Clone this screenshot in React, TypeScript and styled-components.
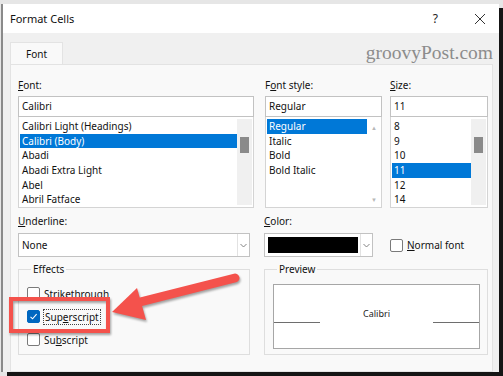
import React from 'react'
import styled, { createGlobalStyle } from 'styled-components'

const GlobalStyle = createGlobalStyle`
    body {
        margin: 0;
        font-family: "Noto Sans", "Segoe UI", sans-serif;
    }
`

const Frame = styled.div`
    position: relative;
    width: 503px;
    height: 376px;
    box-sizing: border-box;
    padding: 4px 0 0 3px;
    background: #e6e6e6;
    overflow: hidden;
`

const Dialog = styled.div`
    display: flex;
    flex-direction: column;
    width: 496px;
    height: 368px;
    background: #f0f0f0;
    box-shadow: 4px 4px 0 #151515, -2px 0 0 #8a8a8a;
    color: #111;
`

const TitleBar = styled.div`
    display: flex;
    align-items: center;
    height: 29px;
    flex: 0 0 29px;
    padding: 0 13px 0 7px;
    background: #fff;
    font-size: 11px;
`

const TitleControls = styled.div`
    display: flex;
    align-items: center;
    gap: 36px;
    margin-left: auto;
    font-size: 12px;
    color: #222;
`

const Body = styled.div`
    display: flex;
    flex-direction: column;
    flex: 1;
    padding: 9px 6px 0 7px;
`

const TabRow = styled.div`
    display: flex;
    align-items: flex-end;
    height: 22px;
`

const Tab = styled.div`
    box-sizing: border-box;
    width: 53px;
    height: 23px;
    margin-bottom: -1px;
    padding-left: 15px;
    line-height: 22px;
    font-size: 10px;
    background: #f9f9f9;
    border: 1px solid #e3e3e3;
    border-bottom: none;
`

const Watermark = styled.div`
    align-self: center;
    margin-left: auto;
    font-family: "Liberation Serif", serif;
    font-size: 19.5px;
    line-height: 20px;
    color: #8c8c8c;
`

const Panel = styled.div`
    flex: 1;
    padding: 12px 4px 0 7px;
    background: #f9f9f9;
    border: 1px solid #e3e3e3;
    font-size: 10px;
`

const Row = styled.div<{ $gapTop?: number }>`
    display: flex;
    align-items: flex-start;
    margin-top: ${p => p.$gapTop ?? 0}px;
`

const Column = styled.div<{ $width: number; $left?: number }>`
    display: flex;
    flex-direction: column;
    width: ${p => p.$width}px;
    margin-left: ${p => p.$left ?? 0}px;
`

const Label = styled.div<{ $h?: number }>`
    height: ${p => p.$h ?? 19}px;
    line-height: 17px;
    white-space: nowrap;
`

const U = styled.span`
    text-decoration: underline;
    text-underline-offset: 1px;
`

const TextInput = styled.div`
    box-sizing: border-box;
    height: 21px;
    padding-left: 3px;
    line-height: 19px;
    background: #fff;
    border: 1px solid #c2c2c2;
`

const List = styled.div`
    box-sizing: border-box;
    display: flex;
    height: 91px;
    background: #fff;
    border: 1px solid #d4d4d4;
    border-top: none;
`

const Items = styled.div`
    flex: 1;
    padding: 2px 0 0 1px;
    overflow: hidden;
`

const Item = styled.div<{ $selected?: boolean }>`
    height: 14.7px;
    line-height: 14.7px;
    padding-left: 2px;
    white-space: nowrap;
    background: ${p => (p.$selected ? '#0078d7' : 'transparent')};
    color: ${p => (p.$selected ? '#fff' : '#111')};
`

const ScrollTrack = styled.div`
    display: flex;
    flex-direction: column;
    align-items: center;
    width: 15px;
    margin: 2px 1px 2px 0;
    padding-top: 18px;
    box-sizing: border-box;
    background: #f0f0f0;
`

const Thumb = styled.div`
    width: 9px;
    height: 16px;
    background: #8a8a8a;
`

const ArrowTrack = styled.div`
    display: flex;
    flex-direction: column;
    align-items: center;
    justify-content: space-between;
    width: 14px;
    padding: 7px 0 3px;
    box-sizing: border-box;
    color: #b8b8b8;
    font-size: 6px;
`

const Dropdown = styled.div`
    box-sizing: border-box;
    display: flex;
    height: 24px;
    background: #fff;
    border: 1px solid #c2c2c2;
`

const DropValue = styled.div`
    flex: 1;
    padding-left: 3px;
    line-height: 22px;
`

const Swatch = styled.div`
    flex: 1;
    margin: 3px 2px 3px 3px;
    background: #000;
`

const DropArrow = styled.div`
    display: flex;
    align-items: center;
    justify-content: center;
    width: 11px;
    border-left: 1px solid #e2e2e2;
`

const CheckRow = styled.label<{ $h?: number }>`
    display: flex;
    align-items: center;
    gap: 4px;
    height: ${p => p.$h ?? 23}px;
    white-space: nowrap;
`

const Box = styled.span<{ $checked?: boolean }>`
    box-sizing: border-box;
    display: inline-flex;
    align-items: center;
    justify-content: center;
    width: 13px;
    height: 13px;
    border-radius: 2px;
    border: 1px solid ${p => (p.$checked ? '#0067c0' : '#7a7a7a')};
    background: ${p => (p.$checked ? '#0067c0' : '#fff')};
`

const Focused = styled.span`
    padding: 0 1px;
    outline: 1px dotted #444;
`

const Group = styled.fieldset<{ $width: number; $left?: number }>`
    box-sizing: border-box;
    width: ${p => p.$width}px;
    height: 93px;
    margin: 0 0 0 ${p => p.$left ?? 0}px;
    padding: 0 7px 0 8px;
    border: 1px solid #dedede;
    min-width: 0;
`

const Legend = styled.legend`
    margin-left: 4px;
    padding: 0 2px;
    line-height: 14px;
    font-size: 10px;
`

const Checks = styled.div`
    padding-top: 6px;
`

const PreviewBox = styled.div`
    box-sizing: border-box;
    display: flex;
    align-items: center;
    height: 65px;
    margin-top: 8px;
    background: #fff;
    border: 1px solid #a6a6a6;
`

const BaseLine = styled.div`
    flex: 0 0 46px;
    height: 1px;
    margin-top: 11px;
    background: #6e6e6e;
`

const Sample = styled.div`
    flex: 1;
    margin-top: -7px;
    text-align: center;
    font-size: 9px;
    color: #222;
`

const Annotation = styled.svg`
    position: absolute;
    left: 0;
    top: 0;
    pointer-events: none;
    filter: drop-shadow(1px 2px 1px rgba(0, 0, 0, 0.35));
`

const Check = () => (
    <svg width="9" height="9" viewBox="0 0 9 9">
        <path d="M1.5 4.8 L3.6 6.8 L7.6 2.2" fill="none" stroke="#fff" strokeWidth="1.1" />
    </svg>
)

const Chevron = () => (
    <svg width="7" height="5" viewBox="0 0 7 5">
        <path d="M0.5 1 L3.5 4 L6.5 1" fill="none" stroke="#777" strokeWidth="0.9" />
    </svg>
)

const fonts = ['Calibri Light (Headings)', 'Calibri (Body)', 'Abadi', 'Abadi Extra Light', 'Abel', 'Abril Fatface']
const styles = ['Regular', 'Italic', 'Bold', 'Bold Italic']
const sizes = ['8', '9', '10', '11', '12', '14']

const App = () => {
    return (
        <Frame>
            <GlobalStyle />
            <Dialog>
                <TitleBar>
                    Format Cells
                    <TitleControls>
                        <span>?</span>
                        <svg width="12" height="12" viewBox="0 0 12 12">
                            <path d="M1 1 L11 11 M11 1 L1 11" stroke="#333" strokeWidth="1" />
                        </svg>
                    </TitleControls>
                </TitleBar>
                <Body>
                    <TabRow>
                        <Tab>Font</Tab>
                        <Watermark>groovyPost.com</Watermark>
                    </TabRow>
                    <Panel>
                        <Row>
                            <Column $width={236}>
                                <Label><U>F</U>ont:</Label>
                                <TextInput>Calibri</TextInput>
                                <List>
                                    <Items>
                                        {fonts.map(f => (
                                            <Item key={f} $selected={f === 'Calibri (Body)'}>{f}</Item>
                                        ))}
                                    </Items>
                                    <ScrollTrack>
                                        <Thumb />
                                    </ScrollTrack>
                                </List>
                            </Column>
                            <Column $width={117} $left={11}>
                                <Label>F<U>o</U>nt style:</Label>
                                <TextInput>Regular</TextInput>
                                <List>
                                    <Items>
                                        {styles.map(s => (
                                            <Item key={s} $selected={s === 'Regular'}>{s}</Item>
                                        ))}
                                    </Items>
                                    <ArrowTrack>
                                        <span>▲</span>
                                        <span>▼</span>
                                    </ArrowTrack>
                                </List>
                            </Column>
                            <Column $width={98} $left={8}>
                                <Label><U>S</U>ize:</Label>
                                <TextInput>11</TextInput>
                                <List>
                                    <Items>
                                        {sizes.map(s => (
                                            <Item key={s} $selected={s === '11'}>{s}</Item>
                                        ))}
                                    </Items>
                                    <ScrollTrack>
                                        <Thumb />
                                    </ScrollTrack>
                                </List>
                            </Column>
                        </Row>

                        <Row $gapTop={5}>
                            <Column $width={232}>
                                <Label $h={20}><U>U</U>nderline:</Label>
                                <Dropdown>
                                    <DropValue>None</DropValue>
                                    <DropArrow><Chevron /></DropArrow>
                                </Dropdown>
                            </Column>
                            <Column $width={109} $left={14}>
                                <Label $h={20}><U>C</U>olor:</Label>
                                <Dropdown>
                                    <Swatch />
                                    <DropArrow><Chevron /></DropArrow>
                                </Dropdown>
                            </Column>
                            <Column $width={98} $left={17}>
                                <Label $h={20} />
                                <CheckRow $h={24}>
                                    <Box />
                                    <span><U>N</U>ormal font</span>
                                </CheckRow>
                            </Column>
                        </Row>

                        <Row $gapTop={5}>
                            <Group $width={232}>
                                <Legend>Effects</Legend>
                                <Checks>
                                    <CheckRow>
                                        <Box />
                                        <span>Stri<U>k</U>ethrough</span>
                                    </CheckRow>
                                    <CheckRow>
                                        <Box $checked><Check /></Box>
                                        <Focused>Sup<U>e</U>rscript</Focused>
                                    </CheckRow>
                                    <CheckRow>
                                        <Box />
                                        <span>Su<U>b</U>script</span>
                                    </CheckRow>
                                </Checks>
                            </Group>
                            <Group $width={224} $left={14}>
                                <Legend>Preview</Legend>
                                <PreviewBox>
                                    <BaseLine />
                                    <Sample>Calibri</Sample>
                                    <BaseLine />
                                </PreviewBox>
                            </Group>
                        </Row>
                    </Panel>
                </Body>
            </Dialog>

            <Annotation width="503" height="376" viewBox="0 0 503 376">
                <rect x="11" y="299" width="97" height="32" fill="none" stroke="#f4524c" strokeWidth="4" />
                <path d="M140 302 L235 278" stroke="#f4524c" strokeWidth="9" strokeLinecap="round" />
                <polygon points="112,312 137,288 146,320" fill="#f4524c" />
            </Annotation>
        </Frame>
    )
}

export default App
